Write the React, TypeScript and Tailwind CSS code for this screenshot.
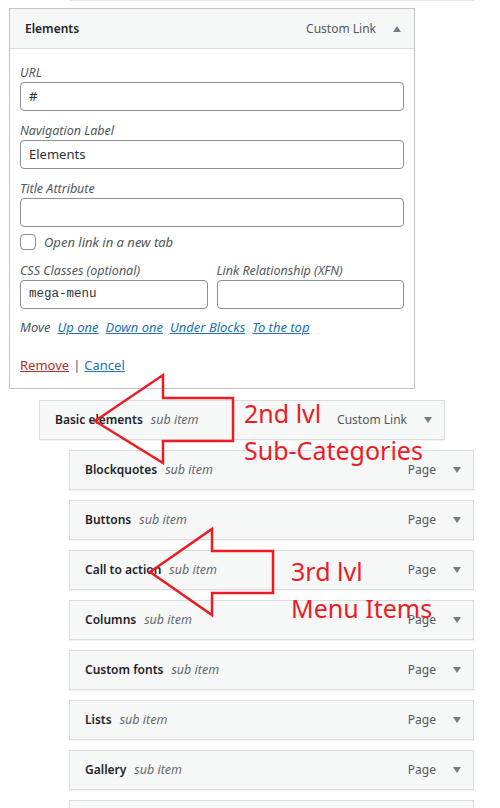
const font = { fontFamily: '"Noto Sans", "Open Sans", sans-serif' }

function Caret({ up = false }: { up?: boolean }) {
  return (
    <svg width="8" height="6" viewBox="0 0 8 6" className="shrink-0">
      <polygon points={up ? '0,6 8,6 4,0' : '0,0 8,0 4,6'} fill="#787c82" />
    </svg>
  )
}

function Field({ label, value, mono = false }: { label: string; value?: string; mono?: boolean }) {
  return (
    <div className="flex flex-col">
      <label className="italic text-[12.5px] leading-[18px] text-[#50575e]">{label}</label>
      <div
        className={
          'h-[29px] rounded-[4px] border border-[#8c8f94] bg-white px-[8px] flex items-center text-[#2c3338] ' +
          (mono ? 'text-[12.5px]' : 'text-[13px]')
        }
        style={mono ? { fontFamily: '"Liberation Mono", "DejaVu Sans Mono", monospace' } : undefined}
      >
        {value}
      </div>
    </div>
  )
}

function MenuRow({ title, type, level }: { title: string; type: string; level: 2 | 3 }) {
  return (
    <div
      className={
        'h-10 border border-[#dcdcde] bg-[#f6f7f7] shadow-[0_1px_1px_rgba(0,0,0,0.04)] flex items-center pl-[15px] pr-[12px] text-[12px] ' +
        (level === 2 ? 'ml-[39px] w-[406px]' : 'ml-[69px] w-[405px]')
      }
    >
      <span className="font-semibold text-[#1d2327]">{title}</span>
      <span className="italic text-[#646970] ml-[8px] text-[12.5px]">sub item</span>
      <span className="ml-auto text-[#50575e]">{type}</span>
      <span className="ml-[17px]">
        <Caret />
      </span>
    </div>
  )
}

const subItems = ['Blockquotes', 'Buttons', 'Call to action', 'Columns', 'Custom fonts', 'Lists', 'Gallery', 'Icons']

export default function App() {
  return (
    <div className="relative w-[500px] h-[808px] overflow-hidden bg-white" style={font}>
      <div className="ml-[70px] w-[404px] h-px bg-[#e8e8e8]" />

      {/* expanded menu item */}
      <div className="ml-[9px] mt-[7px] w-[406px] border border-[#c3c4c7] bg-white">
        <div className="h-10 bg-[#f6f7f7] border-b border-[#dcdcde] flex items-center pl-[15px] pr-[13px] text-[12px]">
          <span className="font-semibold text-[#1d2327]">Elements</span>
          <span className="ml-auto text-[#50575e]">Custom Link</span>
          <span className="ml-[17px]">
            <Caret up />
          </span>
        </div>

        <div className="px-[10px] pt-[15px] pb-[14px] flex flex-col">
          <div className="flex flex-col gap-[11px]">
            <Field label="URL" value="#" />
            <Field label="Navigation Label" value="Elements" />
            <Field label="Title Attribute" />
          </div>

          <div className="mt-[7px] h-4 flex items-center gap-[8px]">
            <div className="w-4 h-4 rounded-[4px] border border-[#8c8f94] bg-white" />
            <span className="italic text-[13px] leading-4 text-[#50575e]">Open link in a new tab</span>
          </div>

          <div className="mt-[12px] grid grid-cols-2 gap-[9px]">
            <Field label="CSS Classes (optional)" value="mega-menu" mono />
            <Field label="Link Relationship (XFN)" />
          </div>

          <div className="mt-[9px] flex items-center gap-[7px] italic text-[13px] leading-[18px]">
            <span className="text-[#50575e]">Move</span>
            <a className="text-[#2271b1] underline">Up one</a>
            <a className="text-[#2271b1] underline">Down one</a>
            <a className="text-[#2271b1] underline">Under Blocks</a>
            <a className="text-[#2271b1] underline">To the top</a>
          </div>

          <div className="mt-[20px] flex items-center gap-[4px] text-[13px] leading-[18px]">
            <a className="text-[#b32d2e] underline">Remove</a>
            <span className="text-[#50575e]">|</span>
            <a className="text-[#2271b1] underline">Cancel</a>
          </div>
        </div>
      </div>

      {/* menu structure */}
      <div className="mt-[11px] flex flex-col gap-[10px]">
        <MenuRow title="Basic elements" type="Custom Link" level={2} />
        {subItems.map((t) => (
          <MenuRow key={t} title={t} type="Page" level={3} />
        ))}
      </div>

      {/* annotations */}
      <svg className="absolute inset-0 pointer-events-none" width="500" height="808" viewBox="0 0 500 808">
        <polygon
          points="95,421 163,375 163,398 233,398 233,441 163,441 163,463"
          fill="none"
          stroke="#ed1c24"
          strokeWidth="2.5"
        />
        <polygon
          points="150,572 212,529 212,551 273,551 273,593 212,593 212,615"
          fill="none"
          stroke="#ed1c24"
          strokeWidth="2.5"
        />
      </svg>
      <div className="absolute left-[244px] top-[398px] text-[#ed1c24] text-[25px] leading-[30px]">
        <div>2nd lvl</div>
        <div className="mt-[7px]">Sub-Categories</div>
      </div>
      <div className="absolute left-[291px] top-[556px] text-[#ed1c24] text-[25px] leading-[30px]">
        <div>3rd lvl</div>
        <div className="mt-[7px]">Menu Items</div>
      </div>
    </div>
  )
}
